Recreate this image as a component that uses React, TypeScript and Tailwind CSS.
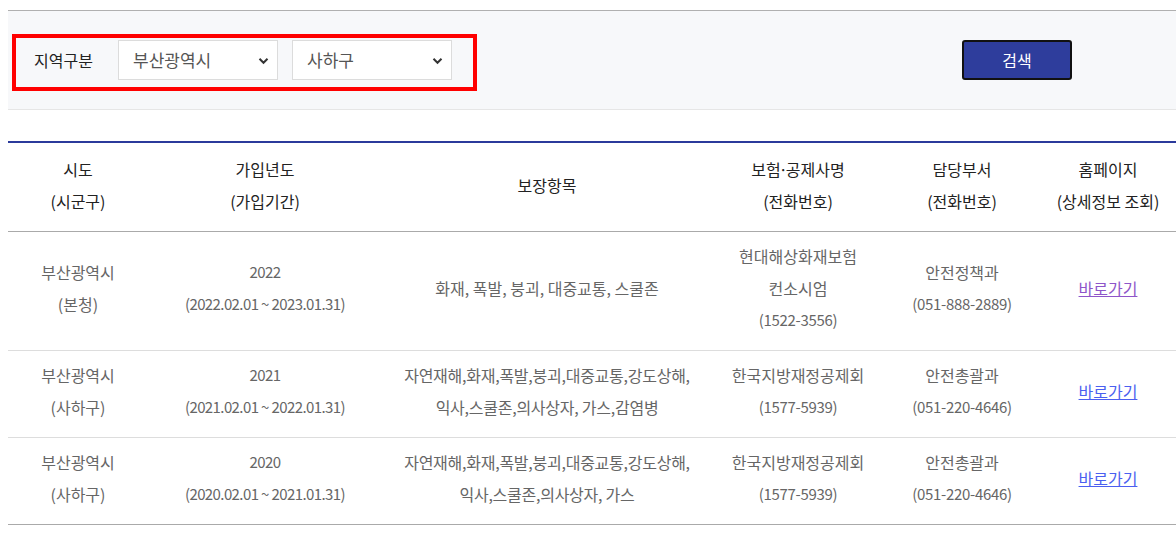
import React from "react";

const font = { fontFamily: '"Noto Sans CJK KR", "Noto Sans", sans-serif' };

function Chevron() {
  return (
    <svg width="11" height="8" viewBox="0 0 11 8" className="pointer-events-none absolute right-[8px] top-[16px]">
      <path d="M1.5 1.8 L5.5 5.8 L9.5 1.8" fill="none" stroke="#333" strokeWidth="2" />
    </svg>
  );
}

function Select({ value }: { value: string }) {
  return (
    <div className="relative h-[40px] w-[160px] border border-[#dcdcdc] bg-white">
      <div className="flex h-full items-center pl-[14px] text-[17px] text-[#555]">{value}</div>
      <Chevron />
    </div>
  );
}

type L = { t: string; n?: "date" | "phone" | "tight" };

const rows: { a: L[]; b: L[]; c: L[]; d: L[]; e: L[]; visited: boolean }[] = [
  {
    a: [{ t: "부산광역시" }, { t: "(본청)" }],
    b: [{ t: "2022", n: "date" }, { t: "(2022.02.01 ~ 2023.01.31)", n: "date" }],
    c: [{ t: "화재, 폭발, 붕괴, 대중교통, 스쿨존" }],
    d: [{ t: "현대해상화재보험" }, { t: "컨소시엄" }, { t: "(1522-3556)", n: "phone" }],
    e: [{ t: "안전정책과" }, { t: "(051-888-2889)", n: "phone" }],
    visited: true,
  },
  {
    a: [{ t: "부산광역시" }, { t: "(사하구)" }],
    b: [{ t: "2021", n: "date" }, { t: "(2021.02.01 ~ 2022.01.31)", n: "date" }],
    c: [{ t: "자연재해,화재,폭발,붕괴,대중교통,강도상해,", n: "tight" }, { t: "익사,스쿨존,의사상자, 가스,감염병", n: "tight" }],
    d: [{ t: "한국지방재정공제회" }, { t: "(1577-5939)", n: "phone" }],
    e: [{ t: "안전총괄과" }, { t: "(051-220-4646)", n: "phone" }],
    visited: false,
  },
  {
    a: [{ t: "부산광역시" }, { t: "(사하구)" }],
    b: [{ t: "2020", n: "date" }, { t: "(2020.02.01 ~ 2021.01.31)", n: "date" }],
    c: [{ t: "자연재해,화재,폭발,붕괴,대중교통,강도상해,", n: "tight" }, { t: "익사,스쿨존,의사상자, 가스", n: "tight" }],
    d: [{ t: "한국지방재정공제회" }, { t: "(1577-5939)", n: "phone" }],
    e: [{ t: "안전총괄과" }, { t: "(051-220-4646)", n: "phone" }],
    visited: false,
  },
];

function Lines({ items }: { items: L[] }) {
  return (
    <>
      {items.map((l, i) => (
        <div
          key={i}
          className={
            l.n === "date"
              ? "whitespace-nowrap text-[15px] tracking-[-0.6px]"
              : l.n === "phone"
              ? "whitespace-nowrap text-[15px] tracking-[-0.3px]"
              : l.n === "tight"
              ? "whitespace-nowrap text-[16px] tracking-[-0.25px]"
              : "whitespace-nowrap text-[16px]"
          }
        >
          {l.t}
        </div>
      ))}
    </>
  );
}

function H({ items }: { items: string[] }) {
  return (
    <>
      {items.map((t, i) => (
        <div key={i} className="whitespace-nowrap">{t}</div>
      ))}
    </>
  );
}

export default function App() {
  return (
    <div style={font} className="min-h-[536px] w-[1176px] overflow-hidden bg-white pl-[8px] pt-[10px]">
      <div className="w-[1200px] border-t border-[#b0b0b0] border-b border-b-[#e6e6e6] bg-[#f7f8fa] pl-[4px] pt-[23px] pb-[18px]">
        <div className="flex items-start">
          <div className="flex h-[57px] w-[465px] items-start border-[4px] border-[#ff0000] pl-[18px] pt-[2px]">
            <span className="flex h-[40px] w-[84px] items-center text-[16px] text-[#222]">지역구분</span>
            <Select value="부산광역시" />
            <div className="w-[14px]" />
            <Select value="사하구" />
          </div>
          <button className="ml-[485px] mt-[6px] flex h-[40px] w-[110px] items-center justify-center rounded-[3px] border-2 border-[#111] bg-[#2e3d9c] text-[16px] text-white">
            검색
          </button>
        </div>
      </div>

      <table className="mt-[31px] w-[1200px] table-fixed border-collapse border-t-2 border-t-[#2b3a9b] text-center leading-[32px]">
        <colgroup>
          <col className="w-[140px]" />
          <col className="w-[234px]" />
          <col className="w-[330px]" />
          <col className="w-[172px]" />
          <col className="w-[156px]" />
          <col className="w-[136px]" />
          <col />
        </colgroup>
        <thead>
          <tr className="border-b border-[#aaaaaa] text-[16px] text-[#222]">
            <th className="pt-[10px] pb-[14px] font-normal"><H items={["시도", "(시군구)"]} /></th>
            <th className="pt-[10px] pb-[14px] font-normal"><H items={["가입년도", "(가입기간)"]} /></th>
            <th className="pt-[10px] pb-[14px] font-normal">보장항목</th>
            <th className="pt-[10px] pb-[14px] font-normal">
              <div className="whitespace-nowrap">
                보험<span className="-mx-[2px]">·</span>공제사명
              </div>
              <div className="whitespace-nowrap">(전화번호)</div>
            </th>
            <th className="pt-[10px] pb-[14px] font-normal"><H items={["담당부서", "(전화번호)"]} /></th>
            <th className="pt-[10px] pb-[14px] font-normal"><H items={["홈페이지", "(상세정보 조회)"]} /></th>
            <th />
          </tr>
        </thead>
        <tbody className="text-[#666]">
          {rows.map((r, i) => (
            <tr key={i} className={i === rows.length - 1 ? "border-b border-[#aaaaaa]" : "border-b border-[#dddddd]"}>
              <td className="pt-[8px] pb-[14px]"><Lines items={r.a} /></td>
              <td className="pt-[8px] pb-[14px]"><Lines items={r.b} /></td>
              <td className="pt-[8px] pb-[14px]"><Lines items={r.c} /></td>
              <td className="pt-[8px] pb-[14px]"><Lines items={r.d} /></td>
              <td className="pt-[8px] pb-[14px]"><Lines items={r.e} /></td>
              <td className="pt-[8px] pb-[14px] text-[16px]">
                <a href="#" className={r.visited ? "text-[#8e55c9] underline" : "text-[#4b5ff0] underline"}>바로가기</a>
              </td>
              <td />
            </tr>
          ))}
        </tbody>
      </table>
    </div>
  );
}
